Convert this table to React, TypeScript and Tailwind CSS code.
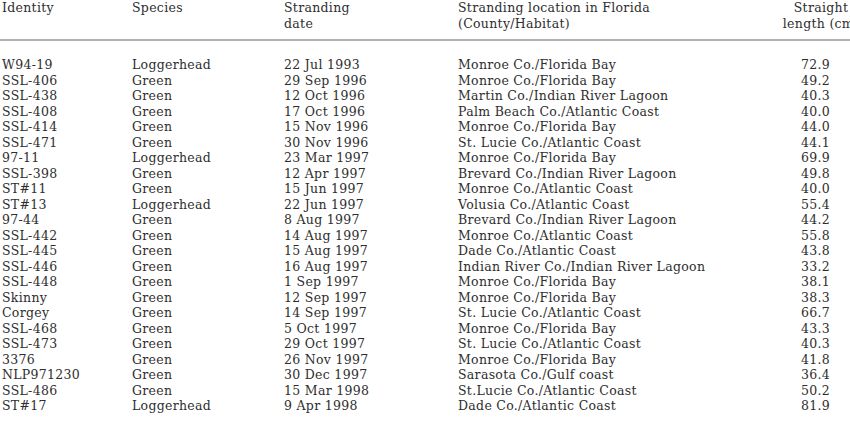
const rows: [string, string, string, string, string][] = [
  ["W94-19", "Loggerhead", "22 Jul 1993", "Monroe Co./Florida Bay", "72.9"],
  ["SSL-406", "Green", "29 Sep 1996", "Monroe Co./Florida Bay", "49.2"],
  ["SSL-438", "Green", "12 Oct 1996", "Martin Co./Indian River Lagoon", "40.3"],
  ["SSL-408", "Green", "17 Oct 1996", "Palm Beach Co./Atlantic Coast", "40.0"],
  ["SSL-414", "Green", "15 Nov 1996", "Monroe Co./Florida Bay", "44.0"],
  ["SSL-471", "Green", "30 Nov 1996", "St. Lucie Co./Atlantic Coast", "44.1"],
  ["97-11", "Loggerhead", "23 Mar 1997", "Monroe Co./Florida Bay", "69.9"],
  ["SSL-398", "Green", "12 Apr 1997", "Brevard Co./Indian River Lagoon", "49.8"],
  ["ST#11", "Green", "15 Jun 1997", "Monroe Co./Atlantic Coast", "40.0"],
  ["ST#13", "Loggerhead", "22 Jun 1997", "Volusia Co./Atlantic Coast", "55.4"],
  ["97-44", "Green", "8 Aug 1997", "Brevard Co./Indian River Lagoon", "44.2"],
  ["SSL-442", "Green", "14 Aug 1997", "Monroe Co./Atlantic Coast", "55.8"],
  ["SSL-445", "Green", "15 Aug 1997", "Dade Co./Atlantic Coast", "43.8"],
  ["SSL-446", "Green", "16 Aug 1997", "Indian River Co./Indian River Lagoon", "33.2"],
  ["SSL-448", "Green", "1 Sep 1997", "Monroe Co./Florida Bay", "38.1"],
  ["Skinny", "Green", "12 Sep 1997", "Monroe Co./Florida Bay", "38.3"],
  ["Corgey", "Green", "14 Sep 1997", "St. Lucie Co./Atlantic Coast", "66.7"],
  ["SSL-468", "Green", "5 Oct 1997", "Monroe Co./Florida Bay", "43.3"],
  ["SSL-473", "Green", "29 Oct 1997", "St. Lucie Co./Atlantic Coast", "40.3"],
  ["3376", "Green", "26 Nov 1997", "Monroe Co./Florida Bay", "41.8"],
  ["NLP971230", "Green", "30 Dec 1997", "Sarasota Co./Gulf coast", "36.4"],
  ["SSL-486", "Green", "15 Mar 1998", "St.Lucie Co./Atlantic Coast", "50.2"],
  ["ST#17", "Loggerhead", "9 Apr 1998", "Dade Co./Atlantic Coast", "81.9"],
];

export default function App() {
  return (
    <div className="w-[850px] h-[421px] overflow-hidden bg-white text-[#2e2e2e] font-['DejaVu_Serif',serif] text-[12.5px] tracking-[0.3px] leading-[15.5px]">
      <div className="grid grid-cols-[130px_152px_174px_300px_126px] pl-[2px] pb-[8px] border-b-2 border-[#b0b0b0]">
        <div>Identity</div>
        <div>Species</div>
        <div>Stranding<br />date</div>
        <div className="whitespace-nowrap">Stranding location in Florida<br />(County/Habitat)</div>
        <div className="whitespace-nowrap text-center">Straight<br />length (cm)</div>
      </div>
      <div className="pt-[16px] pl-[2px]">
        {rows.map((r) => (
          <div key={r[0] + r[2]} className="grid grid-cols-[130px_152px_174px_300px_72px]">
            <div>{r[0]}</div>
            <div>{r[1]}</div>
            <div>{r[2]}</div>
            <div className="whitespace-nowrap">{r[3]}</div>
            <div className="text-right">{r[4]}</div>
          </div>
        ))}
      </div>
    </div>
  );
}
